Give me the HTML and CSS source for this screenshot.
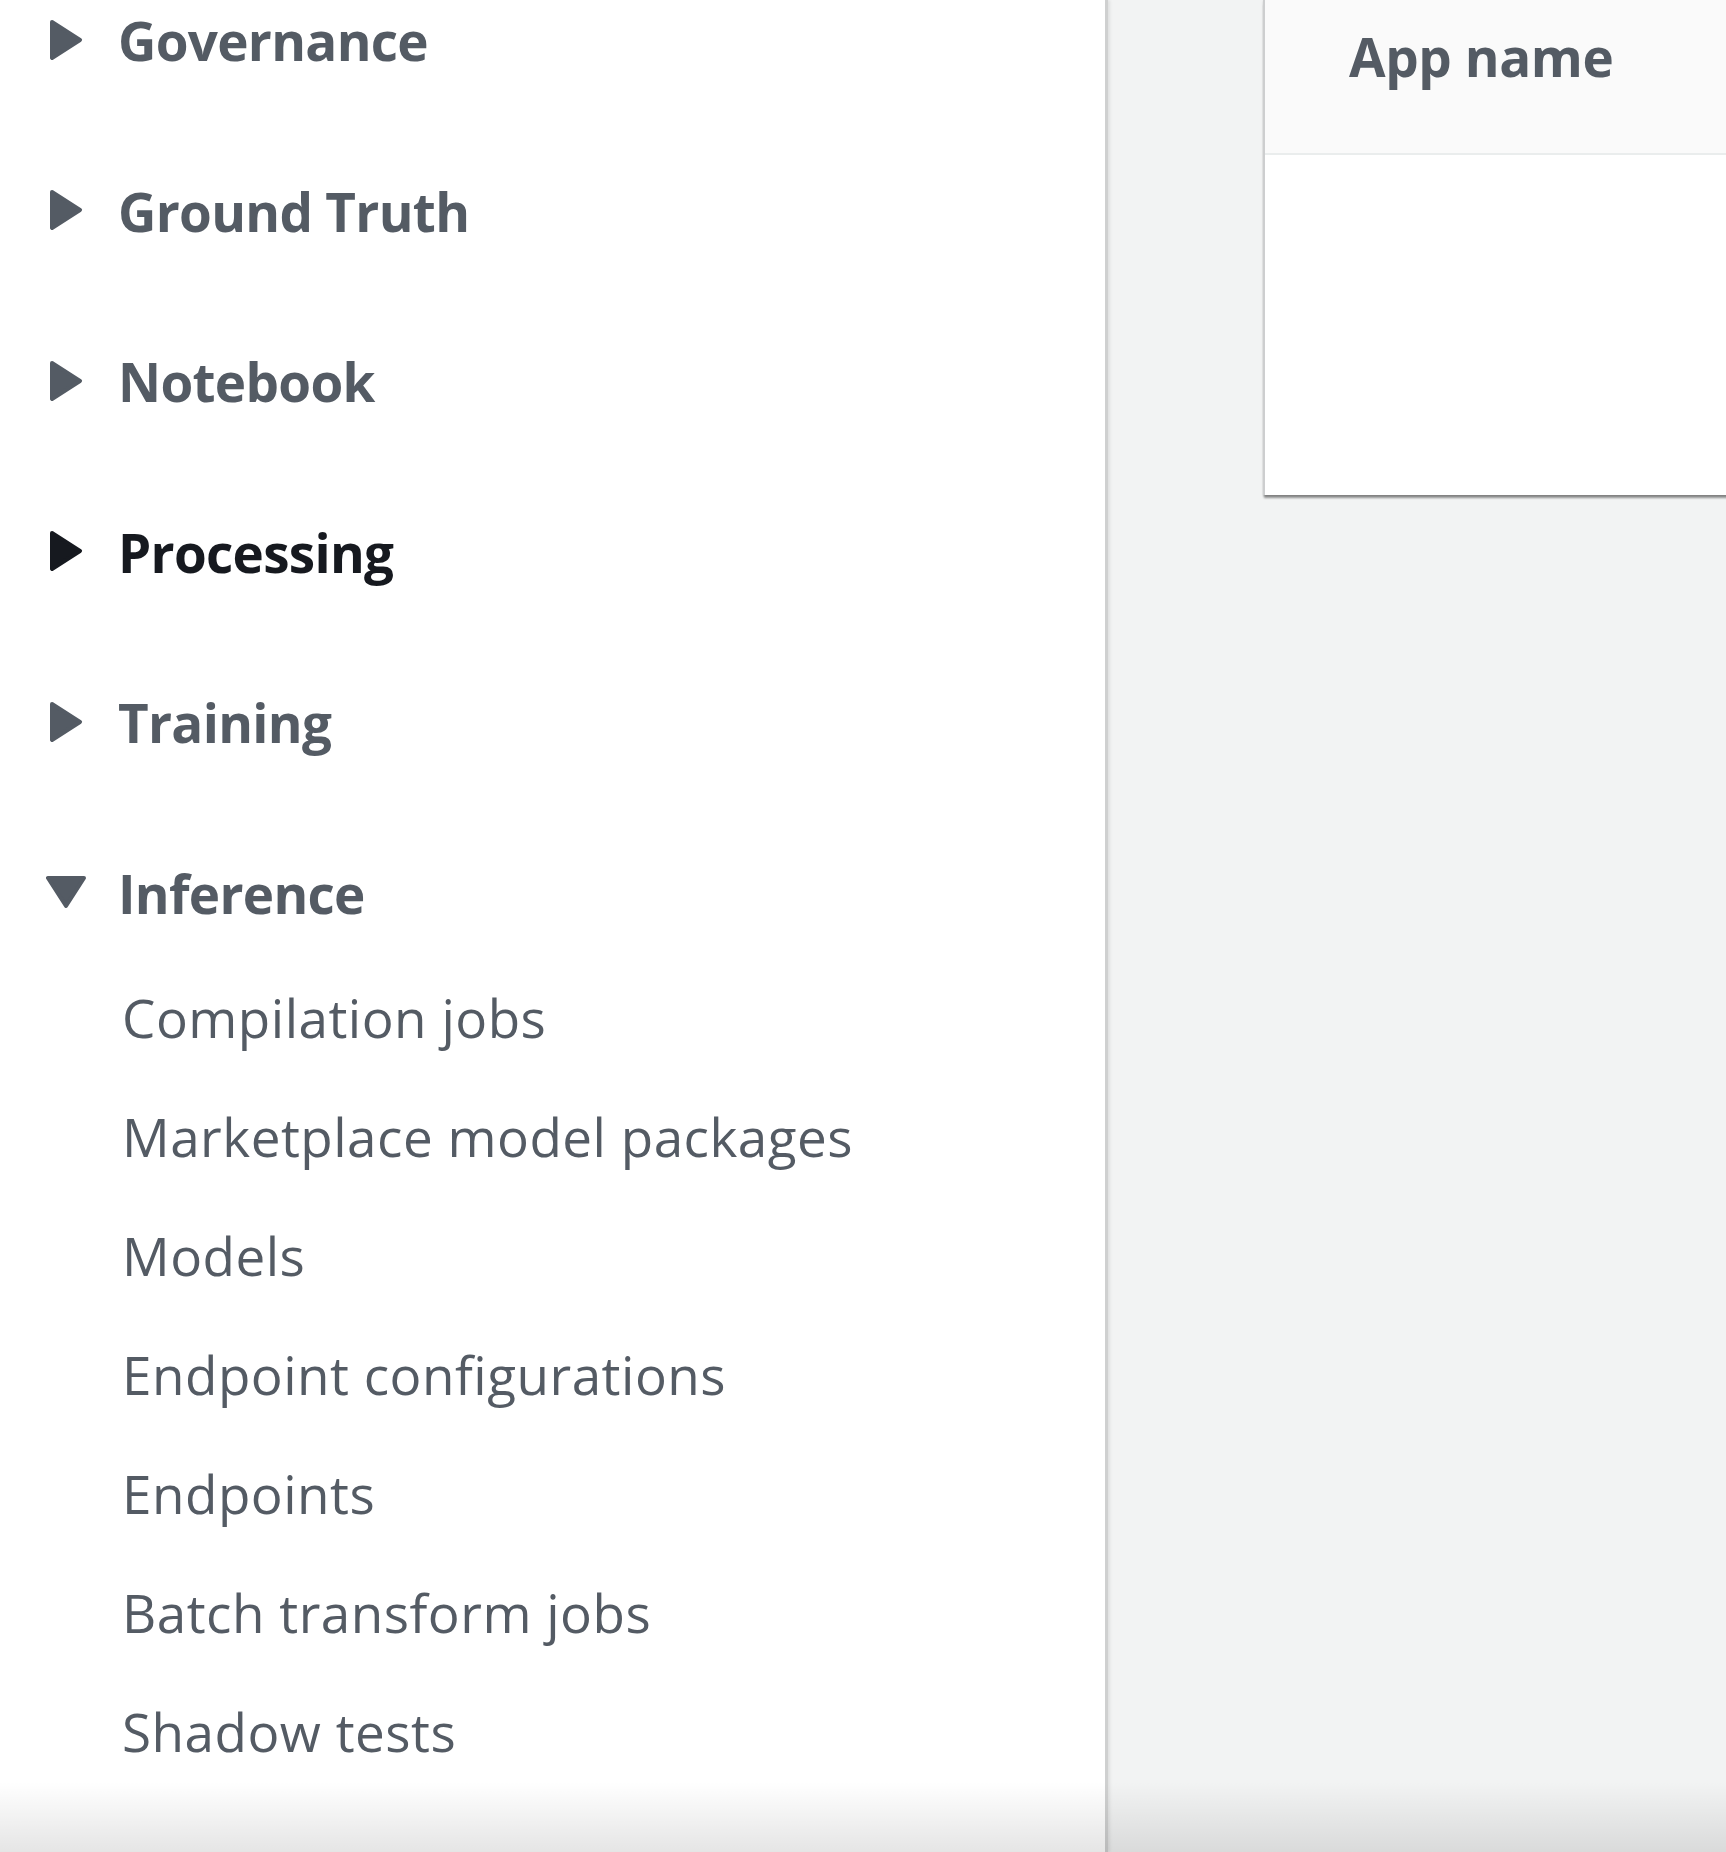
FILE: index.html
```html
<!DOCTYPE html>
<html lang="en">
<head>
<meta charset="utf-8">
<title>SageMaker</title>
<link rel="stylesheet" href="styles.css">
</head>
<body>
<div class="page">
  <nav class="sidebar">
    <ul class="nav">
      <li class="section">
        <div class="section-head">
          <svg class="caret" viewBox="0 0 40 40"><polygon points="6,2 34,20 6,38"/></svg>
          <span class="section-title">Governance</span>
        </div>
      </li>
      <li class="section">
        <div class="section-head">
          <svg class="caret" viewBox="0 0 40 40"><polygon points="6,2 34,20 6,38"/></svg>
          <span class="section-title">Ground Truth</span>
        </div>
      </li>
      <li class="section">
        <div class="section-head">
          <svg class="caret" viewBox="0 0 40 40"><polygon points="6,2 34,20 6,38"/></svg>
          <span class="section-title">Notebook</span>
        </div>
      </li>
      <li class="section">
        <div class="section-head is-hover">
          <svg class="caret" viewBox="0 0 40 40"><polygon points="6,2 34,20 6,38"/></svg>
          <span class="section-title">Processing</span>
        </div>
      </li>
      <li class="section">
        <div class="section-head">
          <svg class="caret" viewBox="0 0 40 40"><polygon points="6,2 34,20 6,38"/></svg>
          <span class="section-title">Training</span>
        </div>
      </li>
      <li class="section is-open">
        <div class="section-head">
          <svg class="caret" viewBox="0 0 40 40"><polygon points="2,6 38,6 20,34"/></svg>
          <span class="section-title">Inference</span>
        </div>
        <ul class="sub">
          <li class="sub-item">Compilation jobs</li>
          <li class="sub-item">Marketplace model packages</li>
          <li class="sub-item">Models</li>
          <li class="sub-item">Endpoint configurations</li>
          <li class="sub-item">Endpoints</li>
          <li class="sub-item">Batch transform jobs</li>
          <li class="sub-item">Shadow tests</li>
        </ul>
      </li>
    </ul>
  </nav>
  <main class="main">
    <section class="card">
      <div class="card-head">
        <span class="col-title">App name</span>
      </div>
      <div class="card-body"></div>
    </section>
  </main>
  <div class="bottom-shade"></div>
</div>
</body>
</html>
```

FILE: styles.css
```css
* {
  box-sizing: border-box;
}

html, body {
  margin: 0;
  padding: 0;
  height: 100%;
}

body {
  font-family: "Open Sans", "Noto Sans", Arial, sans-serif;
  background: #f2f3f3;
  overflow: hidden;
}

.page {
  position: relative;
  display: flex;
  height: 1852px;
  overflow: hidden;
}

.sidebar {
  width: 1108px;
  flex: 0 0 1108px;
  background: #ffffff;
  border-right: 3px solid #cfd0d0;
  box-shadow: 2px 0 3px rgba(0, 0, 0, 0.08);
  padding-top: 5px;
  position: relative;
  z-index: 1;
}

.nav,
.sub {
  list-style: none;
  margin: 0;
  padding: 0;
}

.section {
  margin-bottom: 98.6px;
}

.section-head {
  display: flex;
  align-items: center;
  height: 72px;
  color: #545b64;
}

.section-head.is-hover {
  color: #16191f;
}

.caret {
  width: 40px;
  height: 40px;
  margin-left: 46px;
  margin-top: -3px;
  flex: 0 0 40px;
}

.caret polygon {
  fill: currentColor;
  stroke: currentColor;
  stroke-width: 4;
  stroke-linejoin: round;
}

.section-title {
  margin-left: 32px;
  font-size: 53px;
  font-weight: 700;
  letter-spacing: -0.7px;
  line-height: 72px;
  white-space: nowrap;
}

.sub {
  margin-top: 27.6px;
}

.sub-item {
  padding-left: 122px;
  font-size: 53px;
  letter-spacing: 0.5px;
  line-height: 119px;
  color: #545b64;
  white-space: nowrap;
}

.main {
  flex: 1 1 auto;
  padding-left: 155px;
  background: #f2f3f3;
  overflow: hidden;
}

.card {
  width: 900px;
  background: #ffffff;
  border-left: 2px solid #cdcecf;
  box-shadow: 0 4px 2px -1px rgba(0, 0, 0, 0.4), 0 1px 2px rgba(0, 0, 0, 0.15);
}

.card-head {
  height: 155px;
  padding-left: 84px;
  background: #fafafa;
  border-bottom: 2px solid #eaeded;
  color: #545b64;
}

.col-title {
  display: block;
  padding-top: 21px;
  font-size: 53px;
  font-weight: 700;
  letter-spacing: -0.4px;
  line-height: 72px;
  white-space: nowrap;
}

.card-body {
  height: 340px;
}

.bottom-shade {
  position: absolute;
  left: 0;
  right: 0;
  bottom: 0;
  height: 70px;
  background: linear-gradient(to bottom, rgba(0, 0, 0, 0), rgba(0, 0, 0, 0.1));
  pointer-events: none;
  z-index: 2;
}
```
